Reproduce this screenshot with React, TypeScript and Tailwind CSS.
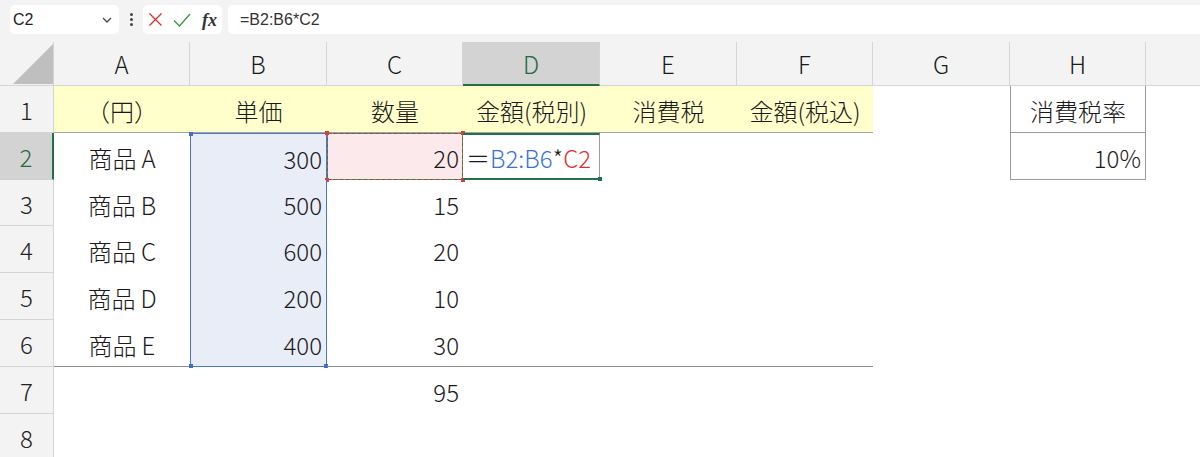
import React from "react";

const GRID =
  "grid grid-cols-[54px_136px_137px_136px_137px_137px_136px_137px_136px_1fr]";

const products = [
  { name: "A", price: "300", qty: "20" },
  { name: "B", price: "500", qty: "15" },
  { name: "C", price: "600", qty: "20" },
  { name: "D", price: "200", qty: "10" },
  { name: "E", price: "400", qty: "30" },
];

const rowHeights = ["h-[47px]", "h-[46px]", "h-[47px]", "h-[47px]", "h-[47px]"];

function RowHead({ n, sel }: { n: number; sel?: boolean }) {
  return sel ? (
    <div className="flex items-center justify-center bg-[#d3d3d3] text-[#1e6b3f] border-r-2 border-r-[#217346] border-b border-b-[#d0d0d0] text-[24px] leading-none pt-[2px]">
      {n}
    </div>
  ) : (
    <div className="flex items-center justify-center bg-[#f3f3f3] text-[#222] border-r border-r-[#d5d5d5] border-b border-b-[#d5d5d5] text-[24px] leading-none pt-[2px]">
      {n}
    </div>
  );
}

function Handle({ color, pos }: { color: string; pos: string }) {
  return <div className={`absolute w-[4px] h-[4px] ${color} ${pos}`} />;
}

export default function App() {
  return (
    <div className="w-[1200px] h-[457px] overflow-hidden bg-white font-['Noto_Sans_CJK_JP',sans-serif] font-light text-[#1a1a1a]">
      {/* Formula bar */}
      <div className="h-[34px] bg-[#f3f3f3] flex items-start pt-[5px] pl-[10px] font-normal">
        <div className="w-[109px] h-[29px] bg-white rounded-[5px] flex items-center justify-between pl-[3px] pr-[7px] font-['Liberation_Sans',sans-serif] text-[16px] text-[#222]">
          <span>C2</span>
          <svg width="10" height="6" viewBox="0 0 10 6" fill="none">
            <path d="M1 1l4 4 4-4" stroke="#444" strokeWidth="1.3" />
          </svg>
        </div>
        <div className="w-[24px] h-[29px] flex flex-col items-center justify-center gap-[2px]">
          <div className="w-[3px] h-[3px] rounded-full bg-[#444]" />
          <div className="w-[3px] h-[3px] rounded-full bg-[#444]" />
          <div className="w-[3px] h-[3px] rounded-full bg-[#444]" />
        </div>
        <div className="w-[79px] h-[29px] bg-white rounded-[5px] flex items-center pl-[5px] gap-[10px]">
          <svg width="15" height="15" viewBox="0 0 15 15" fill="none">
            <path d="M1.5 1.5l12 12M13.5 1.5l-12 12" stroke="#e0312b" strokeWidth="1.4" />
          </svg>
          <svg width="18" height="14" viewBox="0 0 18 14" fill="none">
            <path d="M1 7.5l5.5 5.5L17 1" stroke="#3a9a45" strokeWidth="1.4" />
          </svg>
          <span className="font-['Liberation_Serif',serif] italic font-bold text-[18px] leading-none text-[#333] ml-[1px]">
            fx
          </span>
        </div>
        <div className="ml-[6px] flex-1 h-[29px] bg-white rounded-l-[5px] flex items-center pl-[12px] font-['Liberation_Sans',sans-serif] text-[16px] text-[#333]">
          =B2:B6*C2
        </div>
      </div>

      {/* Column header */}
      <div className="h-[52px] bg-[#f3f3f3] pt-[8px]">
        <div className={`${GRID} h-[44px] text-[24px] leading-none`}>
          <div className="relative border-r border-r-[#d5d5d5] border-b border-b-[#d5d5d5]">
            <svg className="absolute left-[13px] top-[2px]" width="40" height="40" viewBox="0 0 40 40">
              <polygon points="40,0 40,40 0,40" fill="#bfbfbf" />
            </svg>
          </div>
          {["A", "B", "C"].map((c) => (
            <div key={c} className="flex items-center justify-center border-r border-r-[#d5d5d5] border-b border-b-[#d5d5d5]">
              {c}
            </div>
          ))}
          <div className="flex items-center justify-center bg-[#d3d3d3] text-[#1e6b3f] border-b-2 border-b-[#217346] border-r border-r-[#d5d5d5] pt-[2px]">
            D
          </div>
          {["E", "F", "G", "H"].map((c) => (
            <div key={c} className="flex items-center justify-center border-r border-r-[#d5d5d5] border-b border-b-[#d5d5d5]">
              {c}
            </div>
          ))}
          <div className="border-b border-b-[#d5d5d5]" />
        </div>
      </div>

      {/* Row 1 */}
      <div className={`${GRID} h-[47px] text-[24px] leading-none`}>
        <RowHead n={1} />
        {["（円）", "単価", "数量", "金額(税別)", "消費税", "金額(税込)"].map((t) => (
          <div key={t} className="flex items-center justify-center bg-[#ffffcc] border-b border-b-[#a3a3a3] pt-[3px] whitespace-nowrap">
            {t}
          </div>
        ))}
        <div />
        <div className="flex items-center justify-center border-x border-b border-[#9a9a9a] pt-[3px]">
          消費税率
        </div>
        <div />
      </div>

      {/* Rows 2-6 */}
      {products.map((p, i) => {
        const first = i === 0;
        const last = i === products.length - 1;
        return (
          <div key={p.name} className={`${GRID} ${rowHeights[i]} text-[24px] leading-none`}>
            <RowHead n={i + 2} sel={first} />
            <div className={`flex items-center justify-center pt-[3px] whitespace-nowrap ${last ? "border-b border-b-[#8e8e8e]" : ""}`}>
              商品<span className="ml-[5px]">{p.name}</span>
            </div>
            <div
              className={`relative flex items-center justify-end pr-[4px] pt-[3px] bg-[#e9edf7] border-x border-x-[#4a78cc] ${
                first ? "border-t border-t-[#4a78cc]" : ""
              } ${last ? "border-b border-b-[#4a78cc]" : ""}`}
            >
              {p.price}
              {first && <Handle color="bg-[#3f6fc8]" pos="left-[-2px] top-[-2px]" />}
              {last && <Handle color="bg-[#3f6fc8]" pos="left-[-2px] bottom-[-2px]" />}
              {last && <Handle color="bg-[#3f6fc8]" pos="right-[-2px] bottom-[-2px]" />}
            </div>
            <div
              className={`relative flex items-center justify-end pr-[4px] pt-[3px] ${first ? "bg-[#fbe9ec]" : ""} ${
                last ? "border-b border-b-[#8e8e8e]" : ""
              }`}
            >
              {p.qty}
              {first && (
                <>
                  <svg className="absolute inset-0" width="136" height="47" viewBox="0 0 136 47" fill="none">
                    <rect x="0.5" y="0.5" width="135" height="46" stroke="#e05a5a" strokeWidth="1" />
                    <rect x="0.5" y="0.5" width="135" height="46" stroke="#3b7a45" strokeWidth="1" strokeDasharray="4 2" />
                  </svg>
                  <Handle color="bg-[#e03a3a]" pos="left-[-2px] top-[-2px]" />
                  <Handle color="bg-[#e03a3a]" pos="right-[-2px] top-[-2px]" />
                  <Handle color="bg-[#e03a3a]" pos="left-[-2px] bottom-[-2px]" />
                  <Handle color="bg-[#e03a3a]" pos="right-[-2px] bottom-[-2px]" />
                </>
              )}
            </div>
            {first ? (
              <div className="relative flex items-center pl-[3px] pt-[3px] border-y-2 border-y-[#217346] border-r border-r-[#9c9c9c] whitespace-nowrap">
                <span>＝</span>
                <span className="text-[#3a73d4]">B2:B6</span>
                <span>*</span>
                <span className="text-[#e0302d]">C2</span>
                <Handle color="bg-[#217346]" pos="right-[-3px] bottom-[-3px]" />
              </div>
            ) : (
              <div className={last ? "border-b border-b-[#8e8e8e]" : ""} />
            )}
            <div className={last ? "border-b border-b-[#8e8e8e]" : ""} />
            <div className={last ? "border-b border-b-[#8e8e8e]" : ""} />
            <div />
            {first ? (
              <div className="flex items-center justify-end pr-[4px] pt-[3px] border-x border-b border-[#9a9a9a]">
                10%
              </div>
            ) : (
              <div />
            )}
            <div />
          </div>
        );
      })}

      {/* Row 7 */}
      <div className={`${GRID} h-[47px] text-[24px] leading-none`}>
        <RowHead n={7} />
        <div />
        <div />
        <div className="flex items-center justify-end pr-[4px] pt-[3px]">95</div>
        <div />
        <div />
        <div />
        <div />
        <div />
        <div />
      </div>

      {/* Row 8 */}
      <div className={`${GRID} h-[47px] text-[24px] leading-none`}>
        <RowHead n={8} />
      </div>
    </div>
  );
}
